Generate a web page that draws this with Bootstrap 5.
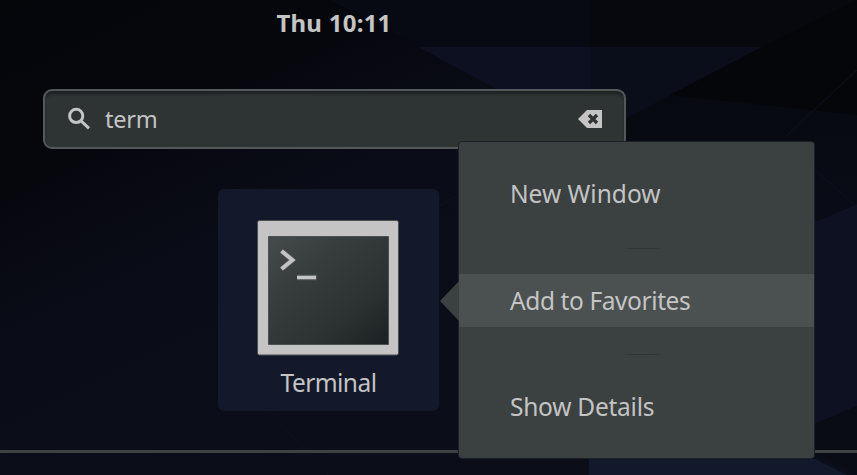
<!DOCTYPE html>
<html lang="en">
<head>
<meta charset="utf-8">
<meta name="viewport" content="width=device-width, initial-scale=1">
<title>Activities</title>
<link href="https://cdn.jsdelivr.net/npm/bootstrap@5.3.0/dist/css/bootstrap.min.css" rel="stylesheet">
<style>
body{background:#090b15;color:#c4c4c4;font-family:"Noto Sans","Open Sans",sans-serif;font-size:24.5px;line-height:32px}
.desktop{width:857px;height:475px}
.wallpaper{z-index:0}
.clock{height:89px;padding:7px 189px 0 0;font-size:24px;font-weight:700;letter-spacing:.25px;text-align:center}
.search{width:583px;height:60px;margin-left:43px;padding:0 22px 0 23px;background:#2e3333;border:2px solid #535858;border-radius:9px;box-shadow:inset 0 4px 3px -1px #1d2224}
.query{margin-left:13px;font-size:23.5px;letter-spacing:-.2px}
.tile{width:221px;height:222px;margin:40px 0 0 218px;padding:31px 1px 0 0;background:#13192b;border-radius:6px}
.tile-label{margin:11px 0 0 1px;letter-spacing:-.55px}
.rule{height:3px;margin-top:39px;background:#3c4141}
.context{left:458px;top:141px;width:357px;height:318px;padding:26px 0;background:#3b4040;border:1px solid #1c2129;border-radius:4px;z-index:3}
.entry{height:53px;padding:0 0 2px 51px;white-space:nowrap}
.entry.chosen{background:#4b5050;letter-spacing:-.4px;padding-bottom:0}
.entry.details{letter-spacing:-.25px;padding-bottom:0}
.gapline{height:53px;padding-top:1px}
.gapline::after{content:"";width:42px;height:1px;background:linear-gradient(90deg,#3b4040,#303537 20%,#303537 80%,#3b4040);margin-left:10px}
.pointer{left:-19px;top:139px}
</style>
<script src="https://cdn.jsdelivr.net/npm/bootstrap@5.3.0/dist/js/bootstrap.bundle.min.js"></script>
</head>
<body class="overflow-hidden">
<div class="desktop position-relative overflow-hidden">
<svg class="wallpaper position-absolute top-0 start-0" width="857" height="475" viewBox="0 0 857 475" aria-hidden="true">
<defs>
<linearGradient id="night" x1="0" y1="0" x2=".65" y2=".75"><stop offset="0" stop-color="#05060a"/><stop offset=".3" stop-color="#06070d"/><stop offset=".55" stop-color="#0a0c17"/><stop offset="1" stop-color="#0b0d19"/></linearGradient>
<linearGradient id="side" x1="0" y1="0" x2="0" y2="1"><stop offset="0" stop-color="#06070b"/><stop offset=".3" stop-color="#080a12"/><stop offset="1" stop-color="#0c1020"/></linearGradient>
</defs>
<path fill="url(#night)" d="M0 0h857v475H0z"/>
<path fill="#080a13" d="M330 0h260v47H420z"/>
<path fill="#07080d" d="M590 0h267L762 47H590z"/>
<path fill="#0c1020" d="M418 47h172v71L500 91z"/>
<path fill="#0a0d1a" d="M590 47h172L626 118h-36z"/>
<path fill="url(#side)" d="M857 0v400l-42 25V142H580z"/>
<path fill="#05060a" d="M857 0 762 47 670 95l187 20z"/>
<path fill="#0d1122" d="m857 204-42 18v202l42-18z"/>
<path fill="#090b15" d="m857 406-42 18v30l42 21z"/>
<path fill="#13192d" d="M589 459h226l32 16H589z"/>
<path fill="none" stroke="#0e1222" d="m815 170 42 37M786 136l71-66M268 410l60 65M439 206l20-11"/>
</svg>
<main class="position-relative d-flex flex-column">
<header class="clock"><span>Thu 10:11</span></header>
<div class="search d-flex align-items-center">
<svg width="24" height="24" viewBox="0 0 24 24" fill="none" stroke="#c4c4c4" stroke-width="3"><circle cx="8.2" cy="8.900" r="6.6"/><path d="m13 13.8 8 7.5"/></svg>
<span class="query">term</span>
<svg class="ms-auto" width="24" height="20" viewBox="0 0 24 20"><path fill="#c4c4c4" d="M0 10 9 1h15v18H9z"/><path stroke="#2e3333" stroke-width="3.3" d="m11 6 8 8m0-8-8 8"/></svg>
</div>
<section class="tile d-flex flex-column align-items-center">
<svg width="142" height="136" viewBox="0 0 142 136">
<defs><linearGradient id="screen" x1="0" y1="0" x2="1" y2="1"><stop stop-color="#464b4b"/><stop offset=".3" stop-color="#383d3d"/><stop offset=".7" stop-color="#2c3131"/><stop offset="1" stop-color="#1b2023"/></linearGradient></defs>
<rect x=".5" y=".5" width="141" height="134.500" rx="2" fill="#c4c4c4" stroke="#4b5050"/>
<path fill="url(#screen)" stroke="#4b5050" d="M11.500 16.500h120v108h-120z"/>
<g fill="none" stroke="#4b5050" stroke-width="6" stroke-linejoin="round"><path d="m24.500 31 11 9-11 9M40 57.500h20"/></g>
<path fill="none" stroke="#c4c4c4" stroke-width="4" d="m24.500 31 11 9-11 9"/><path stroke="#c4c4c4" stroke-width="3.500" d="M40 57.500h19"/>
</svg>
<div class="tile-label">Terminal</div>
</section>
<div class="rule"></div>
</main>
<nav class="context position-absolute">
<svg class="pointer position-absolute" width="19" height="40" viewBox="0 0 19 40"><path fill="#3b4040" d="M19 0v40L0 20z"/></svg>
<div class="entry d-flex align-items-center"><span>New Window</span></div>
<div class="gapline d-flex align-items-center justify-content-center"></div>
<div class="entry chosen d-flex align-items-center"><span>Add to Favorites</span></div>
<div class="gapline d-flex align-items-center justify-content-center"></div>
<div class="entry details d-flex align-items-center"><span>Show Details</span></div>
</nav>
</div>
</body>
</html>
